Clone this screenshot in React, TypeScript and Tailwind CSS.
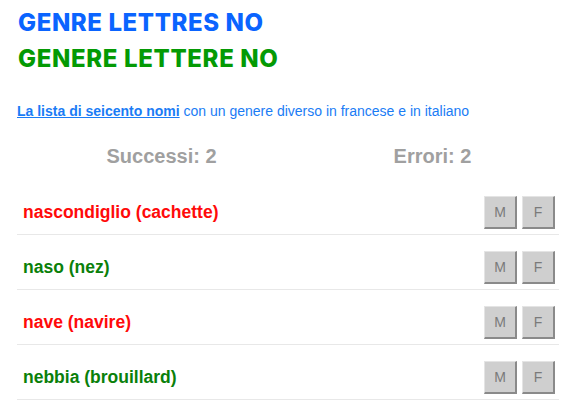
import React from 'react'

type Word = { it: string; fr: string; ok: boolean }

const words: Word[] = [
  { it: 'nascondiglio', fr: 'cachette', ok: false },
  { it: 'naso', fr: 'nez', ok: true },
  { it: 'nave', fr: 'navire', ok: false },
  { it: 'nebbia', fr: 'brouillard', ok: true },
]

const GenderButton: React.FC<{ label: string }> = ({ label }) => (
  <button className="w-[33px] h-[33px] bg-[#cfcfcf] text-[#7a7a7a] text-[14px] border-t border-l border-r-2 border-b-2 border-t-[#e4e4e4] border-l-[#e4e4e4] border-r-[#8a8a8a] border-b-[#8a8a8a] flex items-center justify-center">
    {label}
  </button>
)

const App: React.FC = () => {
  return (
    <div className="pl-[17px] pr-[9px] pt-[5px] bg-white min-h-screen font-['Liberation_Sans',Arial,sans-serif]">
      <h1 className="pl-[1px] text-[24px] leading-[36px] font-extrabold text-[#0a64ff] font-['Inter',sans-serif] tracking-[0.6px]">
        GENRE LETTRES NO
      </h1>
      <h2 className="pl-[1px] text-[24px] leading-[36px] font-extrabold text-[#049a04] font-['Inter',sans-serif] tracking-[0.65px]">
        GENERE LETTERE NO
      </h2>

      <p className="mt-[24px] text-[14px] leading-[20px] text-[#1a7cf5]">
        <a href="#" className="font-bold underline">
          La lista di seicento nomi
        </a>{' '}
        con un genere diverso in francese e in italiano
      </p>

      <div className="mt-[21px] grid grid-cols-2 text-[20px] leading-[28px] font-bold text-[#a0a0a0]">
        <div className="pl-[18px] text-center">Successi: 2</div>
        <div className="pl-[18px] text-center">Errori: 2</div>
      </div>

      <div className="mt-[10px]">
        {words.map((w) => (
          <div
            key={w.it}
            className="flex items-center justify-between pl-[6px] pr-[4px] pt-[16px] pb-[5px] border-b border-[#e8e8e8]"
          >
            <span
              className={`text-[17.5px] font-bold ${w.ok ? 'text-[#0a800a]' : 'text-[#ff0a0a]'}`}
            >
              {w.it} ({w.fr})
            </span>
            <div className="flex gap-[5px]">
              <GenderButton label="M" />
              <GenderButton label="F" />
            </div>
          </div>
        ))}
      </div>
    </div>
  )
}

export default App
